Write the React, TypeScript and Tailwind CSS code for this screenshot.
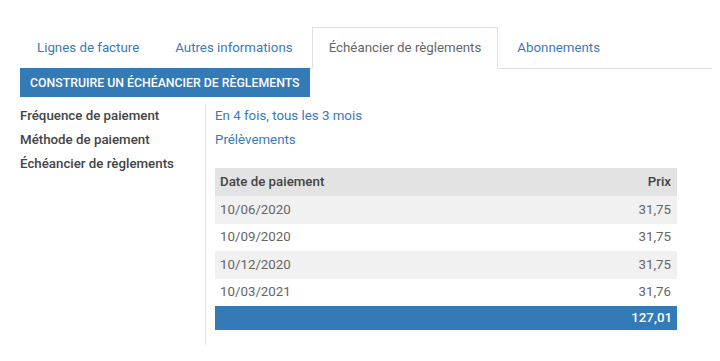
const tabs = ['Lignes de facture', 'Autres informations', 'Échéancier de règlements', 'Abonnements'];

const payments = [
    { date: '10/06/2020', price: '31,75' },
    { date: '10/09/2020', price: '31,75' },
    { date: '10/12/2020', price: '31,75' },
    { date: '10/03/2021', price: '31,76' },
];

const App = () => {
    return (
        <div className="min-h-[361px] w-[720px] bg-white pl-5 pt-[27px] font-['Roboto',sans-serif] text-[13.3px] leading-5 text-[#555]">
            {/* tabs */}
            <ul className="flex w-[692px] border-b border-[#dee2e6]">
                {tabs.map((tab, i) =>
                    i === 2 ? (
                        <li
                            key={tab}
                            className="-mb-px mr-0.5 border border-[#dee2e6] border-b-white bg-white px-4 py-[10px] text-[#666]"
                        >
                            {tab}
                        </li>
                    ) : (
                        <li
                            key={tab}
                            className="-mb-px mr-0.5 border border-transparent px-4 py-[10px] text-[#3a7ab8]"
                        >
                            {tab}
                        </li>
                    )
                )}
            </ul>

            <div className="relative -mt-px">
                <button className="h-[29px] bg-[#337ab7] px-2.5 text-[12.3px] font-medium uppercase text-white">
                    Construire un échéancier de règlements
                </button>
            </div>

            {/* form */}
            <div className="mt-[7px] flex">
                <div className="w-[185px] font-medium text-[#444]">
                    <div className="flex h-6 items-center">Fréquence de paiement</div>
                    <div className="flex h-6 items-center">Méthode de paiement</div>
                    <div className="flex h-6 items-center">Échéancier de règlements</div>
                </div>
                <div className="border-l border-[#e4e4e4] pb-[15px] pl-[9px]">
                    <div className="flex h-6 items-center text-[#3a7ab8]">En 4 fois, tous les 3 mois</div>
                    <div className="flex h-6 items-center text-[#3a7ab8]">Prélèvements</div>

                    <div className="mt-4 w-[462px]">
                        <div className="flex h-7 items-center justify-between bg-[#e3e3e3] pl-[5px] pr-[6px] font-medium text-[#444]">
                            <span>Date de paiement</span>
                            <span>Prix</span>
                        </div>
                        {payments.map((p, i) => (
                            <div
                                key={p.date}
                                className={`flex h-[27.5px] items-center justify-between pl-[5px] pr-[6px] text-[#666] ${
                                    i % 2 === 0 ? 'bg-[#f1f1f1]' : 'bg-white'
                                }`}
                            >
                                <span>{p.date}</span>
                                <span>{p.price}</span>
                            </div>
                        ))}
                        <div className="flex h-6 items-center justify-end bg-[#337ab7] pr-[5px] font-medium text-white">
                            127,01
                        </div>
                    </div>
                </div>
            </div>
        </div>
    );
};

export default App;
